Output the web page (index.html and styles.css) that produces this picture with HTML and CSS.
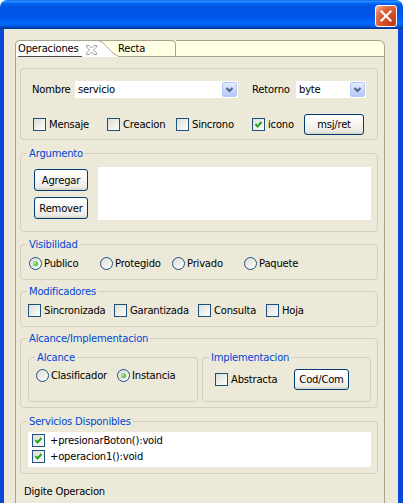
FILE: index.html
```html
<!DOCTYPE html>
<html>
<head>
<meta charset="utf-8">
<link rel="stylesheet" href="styles.css">
</head>
<body>
<div class="window">
  <div class="titlebar">
    <div class="close"><svg width="20" height="20" viewBox="0 0 20 20"><path d="M5.5 5.5 L14.5 14.5 M14.5 5.5 L5.5 14.5" stroke="#fff" stroke-width="2.2" stroke-linecap="square"/></svg></div>
  </div>
  <div class="frame">
    <div class="folder">
      <div class="strip">
        <div class="tab-sel"><span class="tab-label">Operaciones</span><svg class="tab-x" width="11" height="10" viewBox="0 0 11 10"><polygon points="0.5,0.5 3,0.5 5.5,3 8,0.5 10.5,0.5 10.5,2 7.5,5 10.5,8 10.5,9.5 8,9.5 5.5,7 3,9.5 0.5,9.5 0.5,8 3.5,5 0.5,2" fill="#fff" stroke="#9a9a9a" stroke-width="1"/></svg></div>
        <svg class="curve" width="25" height="17" viewBox="0 0 25 17"><rect width="25" height="17" fill="#FFFFE3"/><path d="M0 0.5 C 9 0.5, 13 16.5, 25 16.5 L25 17 L0 17 Z" fill="#fff"/><path d="M0 0.5 L25 0.5" stroke="#A6A391"/><path d="M0 0.5 C 9 0.5, 13 16.5, 25 16.5" fill="none" stroke="#A6A391"/></svg>
        <div class="tab">Recta</div>
        <div class="strip-fill"></div>
      </div>
      <div class="panel">
        <div class="box-main">
          <div class="row-name">
            <span class="lbl-nombre">Nombre</span>
            <div class="combo combo-nombre"><span class="combo-text">servicio</span><span class="combo-btn"><svg width="13" height="13" viewBox="0 0 13 13"><path d="M3.5 5 L6.5 8 L9.5 5" fill="none" stroke="#4D6185" stroke-width="2"/></svg></span></div>
            <span class="lbl-retorno">Retorno</span>
            <div class="combo combo-retorno"><span class="combo-text">byte</span><span class="combo-btn"><svg width="13" height="13" viewBox="0 0 13 13"><path d="M3.5 5 L6.5 8 L9.5 5" fill="none" stroke="#4D6185" stroke-width="2"/></svg></span></div>
          </div>
          <div class="row-flags">
            <div class="chk"><span class="cb"></span>Mensaje</div>
            <div class="chk"><span class="cb"></span>Creacion</div>
            <div class="chk"><span class="cb"></span>Sincrono</div>
            <div class="chk"><span class="cb"><svg width="11" height="11" viewBox="0 0 11 11"><path d="M2.5 5 L4.5 7.5 L8.5 3" fill="none" stroke="#21A121" stroke-width="2"/></svg></span>icono</div>
            <div class="btn btn-msj">msj/ret</div>
          </div>
        </div>

        <fieldset class="grp grp-arg">
          <legend>Argumento</legend>
          <div class="arg-row">
            <div class="arg-btns">
              <div class="btn btn-arg">Agregar</div>
              <div class="btn btn-arg">Remover</div>
            </div>
            <div class="arg-list"></div>
          </div>
        </fieldset>

        <fieldset class="grp grp-vis">
          <legend>Visibilidad</legend>
          <div class="radio-row">
            <div class="opt"><span class="rb on"></span>Publico</div>
            <div class="opt"><span class="rb"></span>Protegido</div>
            <div class="opt"><span class="rb"></span>Privado</div>
            <div class="opt"><span class="rb"></span>Paquete</div>
          </div>
        </fieldset>

        <fieldset class="grp grp-mod">
          <legend>Modificadores</legend>
          <div class="mod-row">
            <div class="chk"><span class="cb"></span>Sincronizada</div>
            <div class="chk"><span class="cb"></span>Garantizada</div>
            <div class="chk"><span class="cb"></span>Consulta</div>
            <div class="chk"><span class="cb"></span>Hoja</div>
          </div>
        </fieldset>

        <fieldset class="grp grp-alc">
          <legend>Alcance/Implementacion</legend>
          <div class="alc-row">
            <fieldset class="grp sub-alcance">
              <legend>Alcance</legend>
              <div class="alcance-row">
                <div class="opt"><span class="rb"></span>Clasificador</div>
                <div class="opt"><span class="rb on"></span>Instancia</div>
              </div>
            </fieldset>
            <fieldset class="grp sub-impl">
              <legend>Implementacion</legend>
              <div class="impl-row">
                <div class="chk chk-abs"><span class="cb"></span>Abstracta</div>
                <div class="btn btn-cod">Cod/Com</div>
              </div>
            </fieldset>
          </div>
        </fieldset>

        <fieldset class="grp grp-serv">
          <legend>Servicios Disponibles</legend>
          <div class="serv-list">
            <div class="serv-item"><span class="cb"><svg width="11" height="11" viewBox="0 0 11 11"><path d="M2.5 5 L4.5 7.5 L8.5 3" fill="none" stroke="#21A121" stroke-width="2"/></svg></span>+presionarBoton():void</div>
            <div class="serv-item"><span class="cb"><svg width="11" height="11" viewBox="0 0 11 11"><path d="M2.5 5 L4.5 7.5 L8.5 3" fill="none" stroke="#21A121" stroke-width="2"/></svg></span>+operacion1():void</div>
          </div>
        </fieldset>

        <div class="digite">Digite Operacion</div>
      </div>
    </div>
  </div>
</div>
</body>
</html>
```

FILE: styles.css
```css
* { box-sizing: border-box; }
html, body { margin: 0; padding: 0; }
body {
  width: 403px;
  height: 503px;
  overflow: hidden;
  background: #ffffff;
  font-family: "DejaVu Sans", sans-serif;
  font-size: 10px;
  line-height: 13px;
  letter-spacing: -0.2px;
  color: #000;
}
.window { width: 403px; height: 503px; display: flex; flex-direction: column; }
.titlebar {
  height: 29px;
  flex: none;
  border-radius: 7px 7px 0 0;
  background: linear-gradient(180deg, #0058EE 0%, #3593FF 4%, #288EFF 6%, #127DFF 8%, #036FFC 10%, #0262EE 14%, #0057E5 20%, #0054E3 24%, #0055EB 56%, #005BF5 66%, #026AFE 76%, #0062EF 86%, #0052D6 92%, #0040AB 96%, #003092 100%);
  display: flex;
  justify-content: flex-end;
  align-items: flex-start;
  padding: 5px 6px 0 0;
}
.close {
  width: 22px;
  height: 22px;
  border: 1px solid #fff;
  border-radius: 3px;
  background: radial-gradient(circle at 85% 85%, #C23A16 0%, #D9532B 50%, #E2704C 72%, #F2B29A 95%);
}
.close svg { display: block; }
.frame {
  flex: 1;
  min-height: 0;
  display: flex;
  background: #ECE9D8;
  border-left: 4px solid #0B46DB;
  border-right: 5px solid #0B46DB;
  padding: 11px 13px 0 11px;
}
.folder { flex: 1; display: flex; flex-direction: column; min-width: 0; }
.strip { display: flex; height: 17px; flex: none; }
.tab-sel {
  width: 82px;
  height: 17px;
  flex: none;
  background: #fff;
  border-left: 1px solid #A6A391;
  border-top: 1px solid #A6A391;
  border-top-left-radius: 5px;
  display: flex;
  align-items: flex-start;
  padding-left: 2px;
}
.tab-label { line-height: 15px; border-bottom: 1px solid #4B4B4B; padding-right: 3px; }
.tab-x { display: block; margin: 4px 0 0 auto; }
.curve { display: block; flex: none; }
.tab {
  width: 58px;
  flex: none;
  margin-left: -4px;
  height: 17px;
  background: #FFFFE3;
  border-top: 1px solid #A6A391;
  border-right: 1px solid #A6A391;
  border-bottom: 1px solid #A6A391;
  border-top-right-radius: 5px;
  line-height: 15px;
}
.strip-fill {
  flex: 1;
  height: 17px;
  background: #FFFFE3;
  border-top: 1px solid #A6A391;
  border-right: 1px solid #A6A391;
  border-bottom: 1px solid #A6A391;
  border-top-right-radius: 6px;
}
.panel {
  flex: 1;
  border-left: 1px solid #A6A391;
  border-right: 1px solid #A6A391;
  padding: 11px 6px 0 4px;
}
.box-main {
  border: 1px solid #D0D0BF;
  border-radius: 4px;
  padding: 12px 0 4px 0;
}
.row-name { display: flex; align-items: center; height: 17px; padding-left: 11px; }
.lbl-nombre { width: 43px; flex: none; }
.lbl-retorno { width: 44px; margin-left: 14px; flex: none; }
.combo {
  height: 17px;
  flex: none;
  background: #fff;
  display: flex;
  align-items: center;
  padding: 0 1px 0 3px;
}
.combo-nombre { width: 163px; }
.combo-retorno { width: 70px; }
.combo-text { flex: 1; }
.combo-btn {
  width: 15px;
  height: 15px;
  border: 1px solid #B4C7F6;
  border-radius: 2px;
  background: linear-gradient(180deg, #E3EBFE 0%, #CCDBFD 45%, #B3C8FA 100%);
  display: flex;
}
.combo-btn svg { display: block; }
.row-flags {
  display: grid;
  grid-template-columns: 74px 69px 76px 52px 60px;
  align-items: center;
  height: 21px;
  margin-top: 16px;
  padding-left: 12px;
}
.chk { display: flex; align-items: center; gap: 3px; height: 13px; white-space: nowrap; }
.cb {
  width: 13px;
  height: 13px;
  flex: none;
  border: 1px solid #1C5180;
  background: linear-gradient(135deg, #DCDCD7 0%, #F4F4F0 70%, #FFFFFF 100%);
  display: flex;
}
.cb svg { display: block; }
.rb {
  width: 13px;
  height: 13px;
  flex: none;
  border-radius: 50%;
  border: 1px solid #1C5180;
  background: linear-gradient(135deg, #DCDCD7 0%, #F4F4F0 70%, #FFFFFF 100%);
  display: flex;
  align-items: center;
  justify-content: center;
}
.rb.on::after {
  content: "";
  width: 5px;
  height: 5px;
  border-radius: 50%;
  background: radial-gradient(circle at 35% 35%, #B9F0A6 0%, #4CC23A 60%, #21A116 100%);
}
.btn {
  border: 1px solid #003C74;
  border-radius: 3px;
  background: linear-gradient(180deg, #FFFFFF 0%, #F6F5F1 50%, #ECEBE6 85%, #D6D0C5 100%);
  display: flex;
  align-items: center;
  justify-content: center;
  white-space: nowrap;
}
.btn-msj { width: 60px; height: 21px; }
.grp {
  margin: 0;
  border: 1px solid #D0D0BF;
  border-radius: 4px;
  padding: 0 6px;
  min-width: 0;
}
.grp > legend {
  padding: 0 2px;
  color: #0046D5;
  line-height: 13px;
}
.grp-arg { margin-top: 7px; padding-bottom: 11px; }
.arg-row { display: flex; margin-top: 7px; }
.arg-btns {
  display: flex;
  flex-direction: column;
  gap: 6px;
  padding-top: 2px;
  margin-left: 7px;
  margin-right: 10px;
  width: 54px;
  flex: none;
}
.btn-arg { height: 22px; }
.arg-list { flex: 1; height: 53px; background: #fff; }
.grp-vis { margin-top: 6px; padding-bottom: 9px; }
.radio-row {
  display: grid;
  grid-template-columns: 71px 72px 72px auto;
  margin-top: 6px;
  padding-left: 2px;
}
.opt { display: flex; align-items: center; gap: 2px; height: 13px; white-space: nowrap; }
.grp-mod { margin-top: 5px; padding-bottom: 9px; }
.mod-row {
  display: grid;
  grid-template-columns: 86px 84px 68px auto;
  margin-top: 6px;
  padding-left: 1px;
}
.grp-alc { margin-top: 5px; padding-bottom: 5px; }
.alc-row { display: flex; gap: 4px; margin-top: 6px; margin-left: 1px; align-items: stretch; }
.sub-alcance { width: 170px; flex: none; }
.sub-impl { width: 169px; flex: none; padding-bottom: 11px; }
.alcance-row {
  display: grid;
  grid-template-columns: 81px auto;
  margin-top: 5px;
  margin-left: 1px;
}
.impl-row { display: flex; align-items: center; margin-top: 5px; height: 21px; }
.chk-abs { width: 79px; margin-left: 6px; flex: none; }
.btn-cod { width: 55px; height: 21px; flex: none; }
.grp-serv { margin-top: 7px; padding-bottom: 6px; }
.serv-list {
  margin-top: 4px;
  margin-left: 1px;
  height: 35px;
  background: #fff;
  padding: 2px 0 0 4px;
  display: flex;
  flex-direction: column;
  gap: 3px;
}
.serv-item { display: flex; align-items: center; gap: 5px; height: 13px; }
.digite { margin-top: 11px; padding-left: 4px; }
```
